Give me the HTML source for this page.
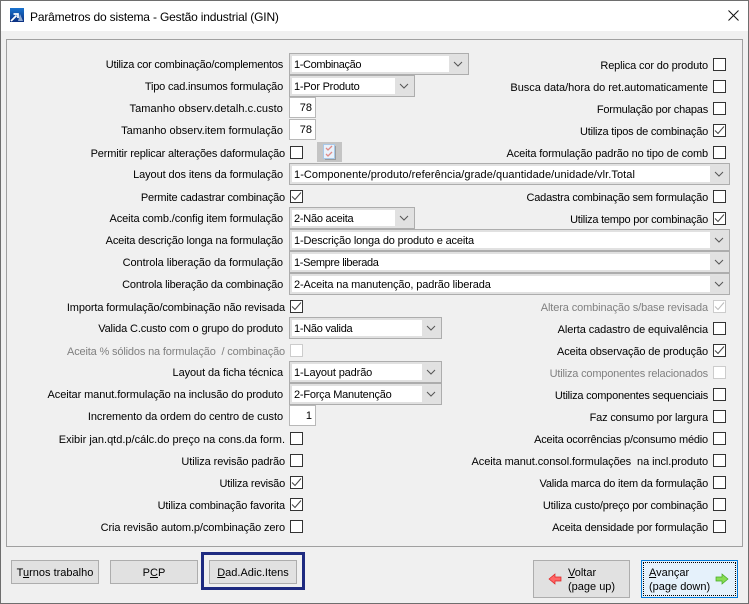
<!DOCTYPE html>
<html><head><meta charset="utf-8">
<style>
html,body{margin:0;padding:0}
body{width:749px;height:604px;overflow:hidden;position:relative;background:#f0f0f0;font-family:"Liberation Sans",sans-serif;font-size:11px;color:#000}
div{position:absolute;box-sizing:border-box}
.l{height:16px;line-height:16px;white-space:nowrap;right:466px;margin-top:1px}
.k{right:464px}
.r{right:41px}
.g{color:#808080}
.c{left:289px;height:22px;border:1px solid #adadad;background:#e1e1e1}
.c .i{left:2px;top:2px;bottom:2px;right:19px;background:#fff;padding-left:2px;line-height:18px;white-space:nowrap}
.c svg{position:absolute;right:5px;top:7px}
.w{width:441px}.m{width:126px}.n{width:153px}
.t{left:289px;width:27px;height:21px;background:#fff;border:1px solid #b8b8b8;text-align:right;padding-right:3px;line-height:21px}
.x{width:13px;height:13px;border:1px solid #333;background:#fff;left:290px}
.y{left:713px}
.d{border-color:#ccc}
.x svg{position:absolute;left:0;top:0}
.b{background:#e1e1e1;border:1px solid #adadad;text-align:center;line-height:24px;height:24px;width:88px;top:560px}
</style></head><body>
<div style="left:0;top:0;width:749px;height:604px;border:1px solid #6e6e6e"></div>
<div style="left:1px;top:1px;width:747px;height:30px;background:#fff"></div>
<svg style="position:absolute;left:10px;top:8px" width="14" height="14" viewBox="0 0 14 14"><defs><linearGradient id="q" x1="0" y1="0" x2="0" y2="1"><stop offset="0" stop-color="#1a74d0"/><stop offset="1" stop-color="#0b2f80"/></linearGradient></defs><rect width="14" height="14" fill="url(#q)"/><path d="M10 6l3 7H8z" fill="#8fa9d0"/><path d="M1 13L6.500 7.500M3.500 6h4.500V10" stroke="#fff" stroke-width="1.700" fill="none"/></svg>
<div style="left:30px;top:9px;height:16px;line-height:16px;white-space:nowrap;font-size:12px;letter-spacing:-.17px">Parâmetros do sistema - Gestão industrial (GIN)</div>
<svg style="position:absolute;left:728px;top:10px" width="11" height="11" viewBox="0 0 11 11"><path d="M.5.5l10 10M10.500.5l-10 10" stroke="#111" stroke-width="1" fill="none"/></svg>

<div style="left:6px;top:39px;width:737px;height:508px;border:1px solid #a0a0a0;background:#f0f0f0"></div>

<div class="l" style="top:56px;letter-spacing:-.23px">Utiliza cor combinação/complementos</div>
<div class="c" style="top:53px;width:180px"><div class="i" style="letter-spacing:-.37px">1-Combinação</div><svg width="10" height="6" viewBox="0 0 10 6"><path d="M1 1l4 4 4-4" stroke="#555" fill="none"/></svg></div>
<div class="l" style="top:78px;letter-spacing:-.19px">Tipo cad.insumos formulação</div>
<div class="c m" style="top:75px"><div class="i" style="letter-spacing:-.23px">1-Por Produto</div><svg width="10" height="6" viewBox="0 0 10 6"><path d="M1 1l4 4 4-4" stroke="#555" fill="none"/></svg></div>
<div class="l" style="top:100px;letter-spacing:.07px">Tamanho observ.detalh.c.custo</div>
<div class="t" style="top:97px">78</div>
<div class="l" style="top:122px">Tamanho observ.item formulação</div>
<div class="t" style="top:119px">78</div>
<div class="l k" style="top:145px;letter-spacing:-.15px">Permitir replicar alterações daformulação</div>
<div class="x" style="top:146px"></div>
<div style="left:317px;top:142px;width:25px;height:20px;background:#c4c4c4"></div>
<svg style="position:absolute;left:323px;top:144px" width="13" height="16" viewBox="0 0 13 16"><rect x="2" y="2" width="11" height="14" fill="#9a9a9a"/><rect x=".5" y=".5" width="11" height="14" fill="#eaf2fb" stroke="#a8c8e8"/><path d="M3 4l2 2 4-4M3 10l2 2 4-4" stroke="#e08a86" stroke-width="1.300" fill="none"/></svg>
<div class="l" style="top:166px;letter-spacing:-.1px">Layout dos itens da formulação</div>
<div class="c w" style="top:163px"><div class="i" style="letter-spacing:.07px">1-Componente/produto/referência/grade/quantidade/unidade/vlr.Total</div><svg width="10" height="6" viewBox="0 0 10 6"><path d="M1 1l4 4 4-4" stroke="#555" fill="none"/></svg></div>
<div class="l k" style="top:189px;letter-spacing:-.18px">Permite cadastrar combinação</div>
<div class="x" style="top:190px"><svg width="11" height="11" viewBox="0 0 11 11"><path d="M1 5.500l3 3 6-7" stroke="#444" fill="none"/></svg></div>
<div class="l" style="top:210px;letter-spacing:-.11px">Aceita comb./config item formulação</div>
<div class="c m" style="top:207px"><div class="i" style="letter-spacing:-.25px">2-Não aceita</div><svg width="10" height="6" viewBox="0 0 10 6"><path d="M1 1l4 4 4-4" stroke="#555" fill="none"/></svg></div>
<div class="l" style="top:232px;letter-spacing:-.17px">Aceita descrição longa na formulação</div>
<div class="c w" style="top:229px"><div class="i" style="letter-spacing:-.16px">1-Descrição longa do produto e aceita</div><svg width="10" height="6" viewBox="0 0 10 6"><path d="M1 1l4 4 4-4" stroke="#555" fill="none"/></svg></div>
<div class="l" style="top:254px;letter-spacing:-.05px">Controla liberação da formulação</div>
<div class="c w" style="top:251px"><div class="i" style="letter-spacing:-.35px">1-Sempre liberada</div><svg width="10" height="6" viewBox="0 0 10 6"><path d="M1 1l4 4 4-4" stroke="#555" fill="none"/></svg></div>
<div class="l" style="top:276px;letter-spacing:-.19px">Controla liberação da combinação</div>
<div class="c w" style="top:273px"><div class="i" style="letter-spacing:-.13px">2-Aceita na manutenção, padrão liberada</div><svg width="10" height="6" viewBox="0 0 10 6"><path d="M1 1l4 4 4-4" stroke="#555" fill="none"/></svg></div>
<div class="l k" style="top:299px;letter-spacing:-.12px">Importa formulação/combinação não revisada</div>
<div class="x" style="top:300px"><svg width="11" height="11" viewBox="0 0 11 11"><path d="M1 5.500l3 3 6-7" stroke="#444" fill="none"/></svg></div>
<div class="l" style="top:320px;letter-spacing:-.14px">Valida C.custo com o grupo do produto</div>
<div class="c n" style="top:317px"><div class="i" style="letter-spacing:-.28px">1-Não valida</div><svg width="10" height="6" viewBox="0 0 10 6"><path d="M1 1l4 4 4-4" stroke="#555" fill="none"/></svg></div>
<div class="l k g" style="top:343px;letter-spacing:-.16px">Aceita % sólidos na formulação&nbsp; / combinação</div>
<div class="x d" style="top:344px"></div>
<div class="l" style="top:364px;letter-spacing:-.09px">Layout da ficha técnica</div>
<div class="c n" style="top:361px"><div class="i" style="letter-spacing:-.13px">1-Layout padrão</div><svg width="10" height="6" viewBox="0 0 10 6"><path d="M1 1l4 4 4-4" stroke="#555" fill="none"/></svg></div>
<div class="l" style="top:386px;letter-spacing:-.09px">Aceitar manut.formulação na inclusão do produto</div>
<div class="c n" style="top:383px"><div class="i" style="letter-spacing:-.22px">2-Força Manutenção</div><svg width="10" height="6" viewBox="0 0 10 6"><path d="M1 1l4 4 4-4" stroke="#555" fill="none"/></svg></div>
<div class="l" style="top:408px;letter-spacing:-.08px">Incremento da ordem do centro de custo</div>
<div class="t" style="top:405px">1</div>
<div class="l k" style="top:431px">Exibir jan.qtd.p/cálc.do preço na cons.da form.</div>
<div class="x" style="top:432px"></div>
<div class="l k" style="top:453px;letter-spacing:-.1px">Utiliza revisão padrão</div>
<div class="x" style="top:454px"></div>
<div class="l k" style="top:475px;letter-spacing:-.2px">Utiliza revisão</div>
<div class="x" style="top:476px"><svg width="11" height="11" viewBox="0 0 11 11"><path d="M1 5.500l3 3 6-7" stroke="#444" fill="none"/></svg></div>
<div class="l k" style="top:497px;letter-spacing:-.15px">Utiliza combinação favorita</div>
<div class="x" style="top:498px"><svg width="11" height="11" viewBox="0 0 11 11"><path d="M1 5.500l3 3 6-7" stroke="#444" fill="none"/></svg></div>
<div class="l k" style="top:519px;letter-spacing:-.11px">Cria revisão autom.p/combinação zero</div>
<div class="x" style="top:520px"></div>

<div class="l r" style="top:57px;letter-spacing:-.14px">Replica cor do produto</div><div class="x y" style="top:58px"></div>
<div class="l r" style="top:79px;letter-spacing:-.03px">Busca data/hora do ret.automaticamente</div><div class="x y" style="top:80px"></div>
<div class="l r" style="top:101px;letter-spacing:-.21px">Formulação por chapas</div><div class="x y" style="top:102px"></div>
<div class="l r" style="top:123px;letter-spacing:-.22px">Utiliza tipos de combinação</div><div class="x y" style="top:124px"><svg width="11" height="11" viewBox="0 0 11 11"><path d="M1 5.500l3 3 6-7" stroke="#444" fill="none"/></svg></div>
<div class="l r" style="top:145px;letter-spacing:-.13px">Aceita formulação padrão no tipo de comb</div><div class="x y" style="top:146px"></div>
<div class="l r" style="top:189px;letter-spacing:-.2px">Cadastra combinação sem formulação</div><div class="x y" style="top:190px"></div>
<div class="l r" style="top:211px;letter-spacing:-.25px">Utiliza tempo por combinação</div><div class="x y" style="top:212px"><svg width="11" height="11" viewBox="0 0 11 11"><path d="M1 5.500l3 3 6-7" stroke="#444" fill="none"/></svg></div>
<div class="l r g" style="top:299px;letter-spacing:-.12px">Altera combinação s/base revisada</div><div class="x y d" style="top:300px"><svg width="11" height="11" viewBox="0 0 11 11"><path d="M1 5.500l3 3 6-7" stroke="#bbb" fill="none"/></svg></div>
<div class="l r" style="top:321px;letter-spacing:-.1px">Alerta cadastro de equivalência</div><div class="x y" style="top:322px"></div>
<div class="l r" style="top:343px;letter-spacing:-.13px">Aceita observação de produção</div><div class="x y" style="top:344px"><svg width="11" height="11" viewBox="0 0 11 11"><path d="M1 5.500l3 3 6-7" stroke="#444" fill="none"/></svg></div>
<div class="l r g" style="top:365px;letter-spacing:-.19px">Utiliza componentes relacionados</div><div class="x y d" style="top:366px"></div>
<div class="l r" style="top:387px;letter-spacing:-.23px">Utiliza componentes sequenciais</div><div class="x y" style="top:388px"></div>
<div class="l r" style="top:409px;letter-spacing:-.17px">Faz consumo por largura</div><div class="x y" style="top:410px"></div>
<div class="l r" style="top:431px;letter-spacing:-.19px">Aceita ocorrências p/consumo médio</div><div class="x y" style="top:432px"></div>
<div class="l r" style="top:453px;letter-spacing:-.08px">Aceita manut.consol.formulações&nbsp; na incl.produto</div><div class="x y" style="top:454px"></div>
<div class="l r" style="top:475px;letter-spacing:-.2px">Valida marca do item da formulação</div><div class="x y" style="top:476px"></div>
<div class="l r" style="top:497px;letter-spacing:-.18px">Utiliza custo/preço por combinação</div><div class="x y" style="top:498px"></div>
<div class="l r" style="top:519px;letter-spacing:-.16px">Aceita densidade por formulação</div><div class="x y" style="top:520px"></div>

<div class="b" style="left:11px">T<u>u</u>rnos trabalho</div>
<div class="b" style="left:110px">P<u>C</u>P</div>
<div style="left:201px;top:552px;width:104px;height:38px;border:3px solid #1e2a80"></div>
<div class="b" style="left:209px"><u>D</u>ad.Adic.Itens</div>

<div style="left:533px;top:560px;width:97px;height:38px;background:#e1e1e1;border:1px solid #adadad"></div>
<svg style="position:absolute;left:548px;top:572px" width="14" height="14" viewBox="0 0 14 14"><path d="M1 7l6-5v3h6v4H7v3z" fill="#f66" stroke="#d22" stroke-width=".7"/></svg>
<div style="left:568px;top:566px;line-height:14px;white-space:nowrap"><u>V</u>oltar<br>(page up)</div>
<div style="left:641px;top:560px;width:97px;height:38px;background:#e5f1fb;border:1px solid #0078d7"></div>
<div style="left:643px;top:562px;width:93px;height:34px;border:1px dotted #000"></div>
<svg style="position:absolute;left:715px;top:572px" width="14" height="14" viewBox="0 0 14 14"><path d="M13 7L7 2v3H1v4h6v3z" fill="#8d5" stroke="#4a2" stroke-width=".7"/></svg>
<div style="left:649px;top:566px;line-height:14px;white-space:nowrap"><u>A</u>vançar<br>(page down)</div>
</body></html>
